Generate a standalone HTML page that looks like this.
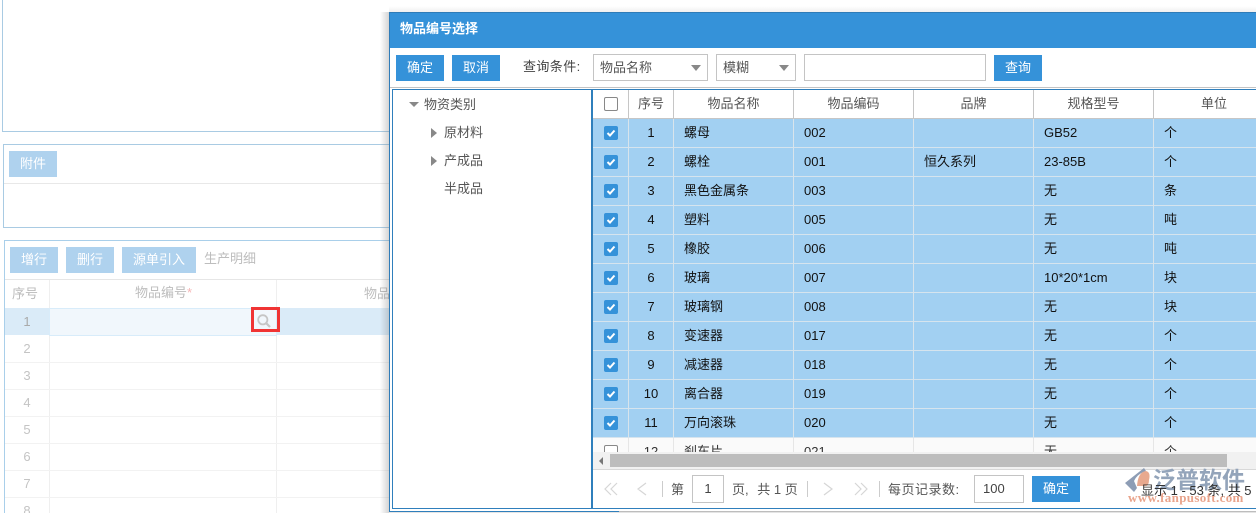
<!DOCTYPE html>
<html lang="zh"><head><meta charset="utf-8"><style>
html,body{margin:0;padding:0;width:1256px;height:513px;overflow:hidden;background:#fff}
body{position:relative;font:13px/1 "Liberation Sans","Noto Sans CJK SC",sans-serif;color:#333}
div,span{position:absolute;box-sizing:border-box;white-space:nowrap}
.pb{background:#afd2ee;color:#fff;text-align:center;height:26px;line-height:25px;top:247px}
.g{color:#bdbdbd}
.n{left:5px;width:44px;text-align:center;color:#c4c4c4;line-height:28px;height:27px;font-size:13px}
.hl{left:5px;width:384px;height:1px;background:#f2f2f2}
.b{background:#3592d9;color:#fff;text-align:center;height:26px;line-height:25px;top:55px;width:48px}
.sel{top:54px;height:27px;border:1px solid #c4c4c4;line-height:25px;padding-left:6px;color:#555}
.ar{width:0;height:0;border-left:5px solid transparent;border-right:5px solid transparent;border-top:6px solid #888}
.tr{left:0;width:663px;height:29px;border-bottom:1px solid #d6e4ee;background:#a2d0f2;color:#111}
.tr span{top:0;line-height:27px;height:28px}
.c2{left:36px;width:44px;text-align:center}
.c3{left:91px}.c4{left:211px}.c5{left:331px}.c6{left:451px}.c7{left:571px}
.l{top:0;width:1px;height:28px;background:#d8e4ec}
.ck{left:11px;top:7px;width:14px;height:14px;background:#3592d9;border-radius:2px}
.th{top:0;height:28px;line-height:28px;text-align:center;color:#555;border-right:1px solid #c6c6c6}
</style></head><body>

<div style="left:2px;top:-2px;width:390px;height:134px;border:1px solid #a9cbe3"></div>

<div style="left:3px;top:144px;width:390px;height:84px;border:1px solid #a9cbe3"></div>
<div class="pb" style="left:9px;top:151px;width:48px">附件</div>
<div style="left:4px;top:183px;width:386px;height:1px;background:#e8e8e8"></div>

<div style="left:4px;top:240px;width:390px;height:280px;border:1px solid #a9cfea"></div>
<div class="pb" style="left:10px;width:48px">增行</div>
<div class="pb" style="left:66px;width:48px">删行</div>
<div class="pb" style="left:122px;width:74px">源单引入</div>
<div class="g" style="left:204px;top:252px">生产明细</div>
<div style="left:5px;top:279px;width:385px;height:1px;background:#e6e6e6"></div>
<div class="g" style="left:12px;top:287px;color:#bbb">序号</div>
<div class="g" style="left:135px;top:286px">物品编号<span style="position:static;color:#f5b5b5">*</span></div>
<div class="g" style="left:364px;top:287px">物品</div>
<div style="left:49px;top:280px;width:1px;height:233px;background:#efefef"></div>
<div style="left:276px;top:280px;width:1px;height:233px;background:#efefef"></div>
<div style="left:5px;top:308px;width:384px;height:27px;background:#daebf8"></div>
<div style="left:49px;top:308px;width:228px;height:28px;background:#f1f7fc;border:1px solid #d8ecfa"></div>
<div class="n" style="top:308px;color:#aaa">1</div>
<div class="n" style="top:335px">2</div>
<div class="n" style="top:362px">3</div>
<div class="n" style="top:389px">4</div>
<div class="n" style="top:416px">5</div>
<div class="n" style="top:443px">6</div>
<div class="n" style="top:470px">7</div>
<div class="n" style="top:497px">8</div>
<div class="hl" style="top:362px"></div><div class="hl" style="top:389px"></div><div class="hl" style="top:416px"></div><div class="hl" style="top:443px"></div><div class="hl" style="top:470px"></div><div class="hl" style="top:497px"></div>
<div style="left:251px;top:307px;width:29px;height:25px;border:3px solid #f03434"></div>
<svg style="position:absolute;left:256px;top:313px" width="16" height="16" viewBox="0 0 16 16"><circle cx="6.8" cy="6.8" r="4.6" fill="none" stroke="#c6c6c6" stroke-width="1.8"/><path d="M10.2 10.2L14 14" stroke="#c6c6c6" stroke-width="2.2"/></svg>

<div style="left:380px;top:12px;width:10px;height:501px;background:linear-gradient(90deg,rgba(120,120,120,0),rgba(120,120,120,.35))"></div>
<div style="left:389px;top:0;width:867px;height:12px;background:linear-gradient(180deg,#fff 50%,#f0f0f0)"></div>

<div style="left:389px;top:12px;width:867px;height:501px;background:#fff;border-left:1px solid #2f7cb8;border-top:1px solid #2f7cb8"></div>
<div style="left:390px;top:13px;width:866px;height:35px;background:#3592d9;color:#fff;font-weight:bold;line-height:32px;padding-left:10px">物品编号选择</div>

<div class="b" style="left:396px">确定</div>
<div class="b" style="left:452px">取消</div>
<div style="left:523px;top:60px;color:#444;letter-spacing:.4px">查询条件:</div>
<div class="sel" style="left:593px;width:115px">物品名称</div><div class="ar" style="left:691px;top:65px"></div>
<div class="sel" style="left:716px;width:80px">模糊</div><div class="ar" style="left:779px;top:65px"></div>
<div class="sel" style="left:804px;width:182px"></div>
<div class="b" style="left:994px">查询</div>
<div style="left:390px;top:87px;width:866px;height:1px;background:#c4c4c4"></div>

<div style="left:392px;top:89px;width:864px;height:420px;border:1px solid #2f7fbc;border-right:0"></div>
<div style="left:591px;top:89px;width:2px;height:420px;background:#2f7fbc"></div>
<div style="left:389px;top:511px;width:230px;height:1px;background:#2f7fbc"></div>
<div style="left:619px;top:511px;width:637px;height:1px;background:#bdbdbd"></div>
<div style="left:389px;top:512px;width:867px;height:1px;background:#e4e4e4"></div>

<div class="ar" style="left:409px;top:102px;border-top-width:5px"></div>
<div style="left:424px;top:98px;color:#555">物资类别</div>
<div style="left:431px;top:128px;width:0;height:0;border-top:5px solid transparent;border-bottom:5px solid transparent;border-left:6px solid #888"></div>
<div style="left:444px;top:126px;color:#555">原材料</div>
<div style="left:431px;top:156px;width:0;height:0;border-top:5px solid transparent;border-bottom:5px solid transparent;border-left:6px solid #888"></div>
<div style="left:444px;top:154px;color:#555">产成品</div>
<div style="left:444px;top:182px;color:#555">半成品</div>

<div style="left:593px;top:90px;width:663px;height:362px;overflow:hidden">
  <div style="left:0;top:0;width:663px;height:29px;border-bottom:1px solid #c6c6c6"></div>
  <div class="th" style="left:0;width:36px"></div>
  <div style="left:11px;top:7px;width:14px;height:14px;border:1px solid #888;border-radius:2px"></div>
  <div class="th" style="left:36px;width:45px">序号</div>
  <div class="th" style="left:81px;width:120px">物品名称</div>
  <div class="th" style="left:201px;width:120px">物品编码</div>
  <div class="th" style="left:321px;width:120px">品牌</div>
  <div class="th" style="left:441px;width:120px">规格型号</div>
  <div class="th" style="left:561px;width:120px;border:0">单位</div>

  <div class="tr" style="top:29px"><div class="l" style="left:35px"></div><div class="l" style="left:80px"></div><div class="l" style="left:200px"></div><div class="l" style="left:320px"></div><div class="l" style="left:440px"></div><div class="l" style="left:560px"></div><div class="ck"><svg width="14" height="14" style="position:absolute" viewBox="0 0 14 14"><path d="M3.5 7l2.5 2.5 4.5-5" fill="none" stroke="#fff" stroke-width="2"/></svg></div><span class="c2">1</span><span class="c3">螺母</span><span class="c4">002</span><span class="c6">GB52</span><span class="c7">个</span></div>
  <div class="tr" style="top:58px"><div class="l" style="left:35px"></div><div class="l" style="left:80px"></div><div class="l" style="left:200px"></div><div class="l" style="left:320px"></div><div class="l" style="left:440px"></div><div class="l" style="left:560px"></div><div class="ck"><svg width="14" height="14" style="position:absolute" viewBox="0 0 14 14"><path d="M3.5 7l2.5 2.5 4.5-5" fill="none" stroke="#fff" stroke-width="2"/></svg></div><span class="c2">2</span><span class="c3">螺栓</span><span class="c4">001</span><span class="c5">恒久系列</span><span class="c6">23-85B</span><span class="c7">个</span></div>
  <div class="tr" style="top:87px"><div class="l" style="left:35px"></div><div class="l" style="left:80px"></div><div class="l" style="left:200px"></div><div class="l" style="left:320px"></div><div class="l" style="left:440px"></div><div class="l" style="left:560px"></div><div class="ck"><svg width="14" height="14" style="position:absolute" viewBox="0 0 14 14"><path d="M3.5 7l2.5 2.5 4.5-5" fill="none" stroke="#fff" stroke-width="2"/></svg></div><span class="c2">3</span><span class="c3">黑色金属条</span><span class="c4">003</span><span class="c6">无</span><span class="c7">条</span></div>
  <div class="tr" style="top:116px"><div class="l" style="left:35px"></div><div class="l" style="left:80px"></div><div class="l" style="left:200px"></div><div class="l" style="left:320px"></div><div class="l" style="left:440px"></div><div class="l" style="left:560px"></div><div class="ck"><svg width="14" height="14" style="position:absolute" viewBox="0 0 14 14"><path d="M3.5 7l2.5 2.5 4.5-5" fill="none" stroke="#fff" stroke-width="2"/></svg></div><span class="c2">4</span><span class="c3">塑料</span><span class="c4">005</span><span class="c6">无</span><span class="c7">吨</span></div>
  <div class="tr" style="top:145px"><div class="l" style="left:35px"></div><div class="l" style="left:80px"></div><div class="l" style="left:200px"></div><div class="l" style="left:320px"></div><div class="l" style="left:440px"></div><div class="l" style="left:560px"></div><div class="ck"><svg width="14" height="14" style="position:absolute" viewBox="0 0 14 14"><path d="M3.5 7l2.5 2.5 4.5-5" fill="none" stroke="#fff" stroke-width="2"/></svg></div><span class="c2">5</span><span class="c3">橡胶</span><span class="c4">006</span><span class="c6">无</span><span class="c7">吨</span></div>
  <div class="tr" style="top:174px"><div class="l" style="left:35px"></div><div class="l" style="left:80px"></div><div class="l" style="left:200px"></div><div class="l" style="left:320px"></div><div class="l" style="left:440px"></div><div class="l" style="left:560px"></div><div class="ck"><svg width="14" height="14" style="position:absolute" viewBox="0 0 14 14"><path d="M3.5 7l2.5 2.5 4.5-5" fill="none" stroke="#fff" stroke-width="2"/></svg></div><span class="c2">6</span><span class="c3">玻璃</span><span class="c4">007</span><span class="c6">10*20*1cm</span><span class="c7">块</span></div>
  <div class="tr" style="top:203px"><div class="l" style="left:35px"></div><div class="l" style="left:80px"></div><div class="l" style="left:200px"></div><div class="l" style="left:320px"></div><div class="l" style="left:440px"></div><div class="l" style="left:560px"></div><div class="ck"><svg width="14" height="14" style="position:absolute" viewBox="0 0 14 14"><path d="M3.5 7l2.5 2.5 4.5-5" fill="none" stroke="#fff" stroke-width="2"/></svg></div><span class="c2">7</span><span class="c3">玻璃钢</span><span class="c4">008</span><span class="c6">无</span><span class="c7">块</span></div>
  <div class="tr" style="top:232px"><div class="l" style="left:35px"></div><div class="l" style="left:80px"></div><div class="l" style="left:200px"></div><div class="l" style="left:320px"></div><div class="l" style="left:440px"></div><div class="l" style="left:560px"></div><div class="ck"><svg width="14" height="14" style="position:absolute" viewBox="0 0 14 14"><path d="M3.5 7l2.5 2.5 4.5-5" fill="none" stroke="#fff" stroke-width="2"/></svg></div><span class="c2">8</span><span class="c3">变速器</span><span class="c4">017</span><span class="c6">无</span><span class="c7">个</span></div>
  <div class="tr" style="top:261px"><div class="l" style="left:35px"></div><div class="l" style="left:80px"></div><div class="l" style="left:200px"></div><div class="l" style="left:320px"></div><div class="l" style="left:440px"></div><div class="l" style="left:560px"></div><div class="ck"><svg width="14" height="14" style="position:absolute" viewBox="0 0 14 14"><path d="M3.5 7l2.5 2.5 4.5-5" fill="none" stroke="#fff" stroke-width="2"/></svg></div><span class="c2">9</span><span class="c3">减速器</span><span class="c4">018</span><span class="c6">无</span><span class="c7">个</span></div>
  <div class="tr" style="top:290px"><div class="l" style="left:35px"></div><div class="l" style="left:80px"></div><div class="l" style="left:200px"></div><div class="l" style="left:320px"></div><div class="l" style="left:440px"></div><div class="l" style="left:560px"></div><div class="ck"><svg width="14" height="14" style="position:absolute" viewBox="0 0 14 14"><path d="M3.5 7l2.5 2.5 4.5-5" fill="none" stroke="#fff" stroke-width="2"/></svg></div><span class="c2">10</span><span class="c3">离合器</span><span class="c4">019</span><span class="c6">无</span><span class="c7">个</span></div>
  <div class="tr" style="top:319px"><div class="l" style="left:35px"></div><div class="l" style="left:80px"></div><div class="l" style="left:200px"></div><div class="l" style="left:320px"></div><div class="l" style="left:440px"></div><div class="l" style="left:560px"></div><div class="ck"><svg width="14" height="14" style="position:absolute" viewBox="0 0 14 14"><path d="M3.5 7l2.5 2.5 4.5-5" fill="none" stroke="#fff" stroke-width="2"/></svg></div><span class="c2">11</span><span class="c3">万向滚珠</span><span class="c4">020</span><span class="c6">无</span><span class="c7">个</span></div>
  <div class="tr" style="top:348px;background:#fafafa;color:#333"><div class="l" style="left:35px;background:#e6e6e6"></div><div class="l" style="left:80px;background:#e6e6e6"></div><div class="l" style="left:200px;background:#e6e6e6"></div><div class="l" style="left:320px;background:#e6e6e6"></div><div class="l" style="left:440px;background:#e6e6e6"></div><div class="l" style="left:560px;background:#e6e6e6"></div><div class="ck" style="background:#fff;border:1px solid #888"></div><span class="c2">12</span><span class="c3">刹车片</span><span class="c4">021</span><span class="c6">无</span><span class="c7">个</span></div>
</div>

<div style="left:593px;top:452px;width:663px;height:17px;background:#f1f1f1"></div>
<div style="left:610px;top:454px;width:617px;height:13px;background:#bdbdbd"></div>
<div style="left:599px;top:457px;width:0;height:0;border-top:4px solid transparent;border-bottom:4px solid transparent;border-right:4px solid #777"></div>
<div style="left:593px;top:469px;width:663px;height:1px;background:#d8d8d8"></div>

<svg style="position:absolute;left:600px;top:480px" width="280" height="20" viewBox="0 0 280 20" fill="none" stroke="#d6d6d6" stroke-width="1.2"><path d="M11 3L5 9l6 6M17 3L11 9l6 6M46 3L38 9l8 6M224 3l8 6-8 6M255 3l6 6-6 6M261 3l6 6-6 6"/></svg>
<div style="left:662px;top:481px;width:1px;height:16px;background:#ccc"></div>
<div style="left:807px;top:481px;width:1px;height:16px;background:#ccc"></div>
<div style="left:879px;top:481px;width:1px;height:16px;background:#ccc"></div>
<div style="left:671px;top:483px;color:#555">第</div>
<div style="left:692px;top:475px;width:32px;height:28px;border:1px solid #c4c4c4;text-align:center;line-height:26px;color:#444">1</div>
<div style="left:732px;top:483px;color:#555"><span style="position:static;margin-right:5px">页,</span> 共 1 页</div>
<div style="left:888px;top:483px;color:#555;letter-spacing:.5px">每页记录数:</div>
<div style="left:974px;top:475px;width:50px;height:28px;border:1px solid #c4c4c4;line-height:26px;padding-left:8px;color:#444">100</div>
<div class="b" style="left:1032px;top:476px">确定</div>

<svg style="position:absolute;left:1124px;top:466px" width="30" height="30" viewBox="0 0 30 30"><path d="M20 2L1 17l9 9 3-4-3-7q3-7 12-10z" fill="#8d9db5"/><path d="M13 20Q14 6 22 5q5 1 3 9 0 5-3 6z" fill="#e8a98f"/></svg>
<div style="left:1153px;top:466px;font-size:23px;font-weight:bold;line-height:28px;color:#93a4ba">泛普软件</div>
<div style="left:1128px;top:491px;font:bold 13px/13px 'Liberation Serif',serif;letter-spacing:.35px;color:#e9a48c">www.fanpusoft.com</div>
<div style="left:1141px;top:484px;color:#333">显示 1 - 53 条, 共 5</div>

</body></html>
